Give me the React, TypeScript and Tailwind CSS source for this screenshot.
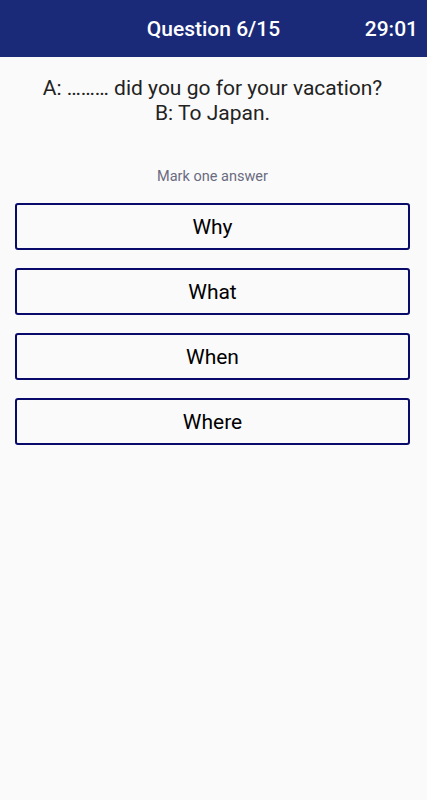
const answers = ['Why', 'What', 'When', 'Where'];

export default function App() {
  return (
    <div className="min-h-[800px] w-full bg-[#fafafa] font-['Roboto',sans-serif]">
      <header className="relative flex h-[57px] items-center justify-center bg-[#1a2a78] pt-[3px] text-white">
        <h1 className="text-[21px] font-medium">Question 6/15</h1>
        <span className="absolute right-[9px] text-[21px] font-medium">29:01</span>
      </header>

      <div className="pl-[15px] pr-[17px]">
        <p className="mt-[19px] text-center text-[21px] leading-[25px] text-[#222]">
          A: ……… did you go for your vacation?
          <br />
          B: To Japan.
        </p>

        <p className="mt-[41px] text-center text-[14.5px] leading-[20px] text-[#6b6b80]">Mark one answer</p>

        <div className="mt-[16px] flex flex-col gap-[18.6px]">
          {answers.map((a) => (
            <button
              key={a}
              className="flex h-[46.5px] items-center justify-center rounded-[3px] border-2 border-[#0a0a6b] pt-[2px] text-[21px] text-black"
            >
              {a}
            </button>
          ))}
        </div>
      </div>
    </div>
  );
}
